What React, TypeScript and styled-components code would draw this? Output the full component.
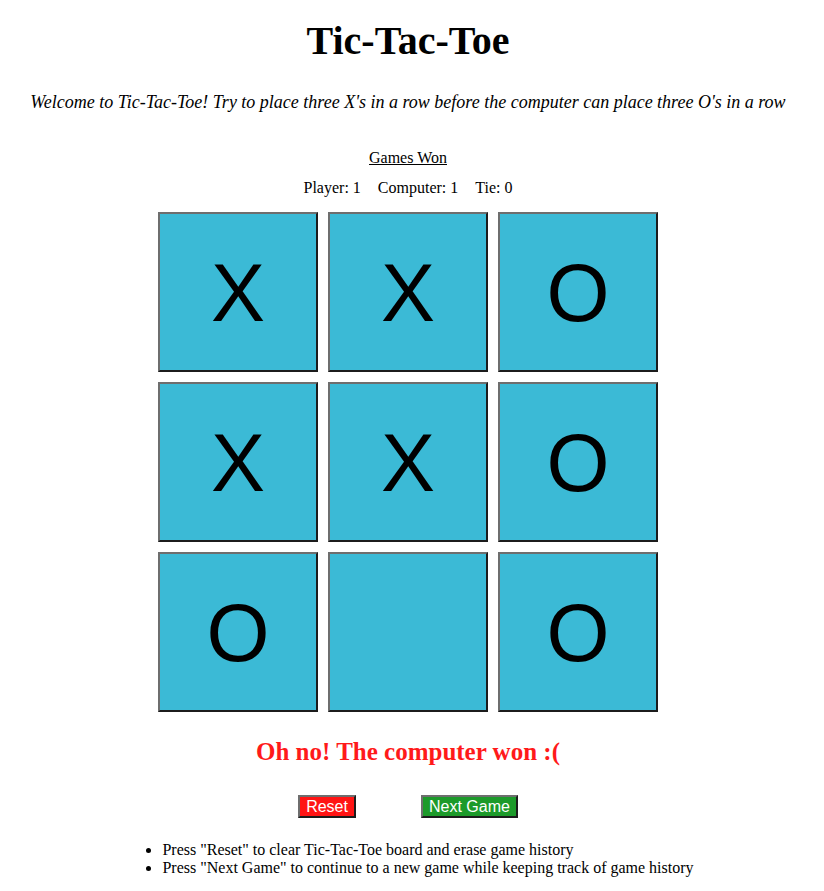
import React from "react";
import styled, { createGlobalStyle } from "styled-components";

const Global = createGlobalStyle`
  html, body { margin: 0; padding: 0; background: #fff; }
  body { font-family: "Liberation Serif", "Times New Roman", serif; color: #000; }
`;

const Page = styled.div`
  width: 816px;
  display: flex;
  flex-direction: column;
  align-items: center;
  text-align: center;
`;

const Title = styled.h1`
  font-size: 40px;
  font-weight: bold;
  margin: 18px 0 0;
  line-height: 46px;
`;

const Intro = styled.p`
  font-style: italic;
  font-size: 18px;
  margin: 27px 0 0;
  line-height: 22px;
`;

const ScoreHead = styled.div`
  margin-top: 36px;
  font-size: 16px;
  line-height: 18px;
  text-decoration: underline;
`;

const ScoreLine = styled.div`
  margin-top: 12px;
  font-size: 16px;
  line-height: 18px;
  display: flex;
  gap: 17px;
`;

const Board = styled.div`
  margin-top: 15px;
  display: grid;
  grid-template-columns: repeat(3, 160px);
  grid-auto-rows: 160px;
  gap: 10px;
`;

const Cell = styled.div`
  box-sizing: border-box;
  background: #3bbad6;
  border: 2px solid;
  border-color: #6e6e6e #1c1c1c #1c1c1c #6e6e6e;
  display: flex;
  align-items: center;
  justify-content: center;
  font-family: "Liberation Sans", Arial, sans-serif;
  font-size: 81px;
  line-height: 1;
  padding-top: 2px;
`;

const Message = styled.div`
  margin-top: 26px;
  color: #ff1a1a;
  font-weight: bold;
  font-size: 25px;
  line-height: 28px;
`;

const Buttons = styled.div`
  margin-top: 29px;
  display: flex;
  gap: 65px;
`;

const Btn = styled.button<{ $bg: string }>`
  box-sizing: border-box;
  height: 23px;
  padding: 0 6px;
  background: ${(p) => p.$bg};
  color: #fff;
  font-family: "Liberation Sans", Arial, sans-serif;
  font-size: 16px;
  line-height: 18px;
  border: 2px solid;
  border-color: #6e6e6e #1c1c1c #1c1c1c #6e6e6e;
  cursor: pointer;
`;

const Notes = styled.ul`
  display: inline-block;
  text-align: left;
  margin: 23px 0 0;
  padding-left: 40px;
  font-size: 16px;
  line-height: 18px;
`;

const board = ["X", "X", "O", "X", "X", "O", "O", "", "O"];

export default function App() {
  return (
    <>
      <Global />
      <Page>
        <Title>Tic-Tac-Toe</Title>
        <Intro>
          Welcome to Tic-Tac-Toe! Try to place three X's in a row before the computer can place three O's in a row
        </Intro>
        <ScoreHead>Games Won</ScoreHead>
        <ScoreLine>
          <span>Player: 1</span>
          <span>Computer: 1</span>
          <span>Tie: 0</span>
        </ScoreLine>
        <Board>
          {board.map((v, i) => (
            <Cell key={i}>{v}</Cell>
          ))}
        </Board>
        <Message>Oh no! The computer won :(</Message>
        <Buttons>
          <Btn $bg="#ff1414">Reset</Btn>
          <Btn $bg="#1c9a2a">Next Game</Btn>
        </Buttons>
        <Notes>
          <li>Press "Reset" to clear Tic-Tac-Toe board and erase game history</li>
          <li>Press "Next Game" to continue to a new game while keeping track of game history</li>
        </Notes>
      </Page>
    </>
  );
}
